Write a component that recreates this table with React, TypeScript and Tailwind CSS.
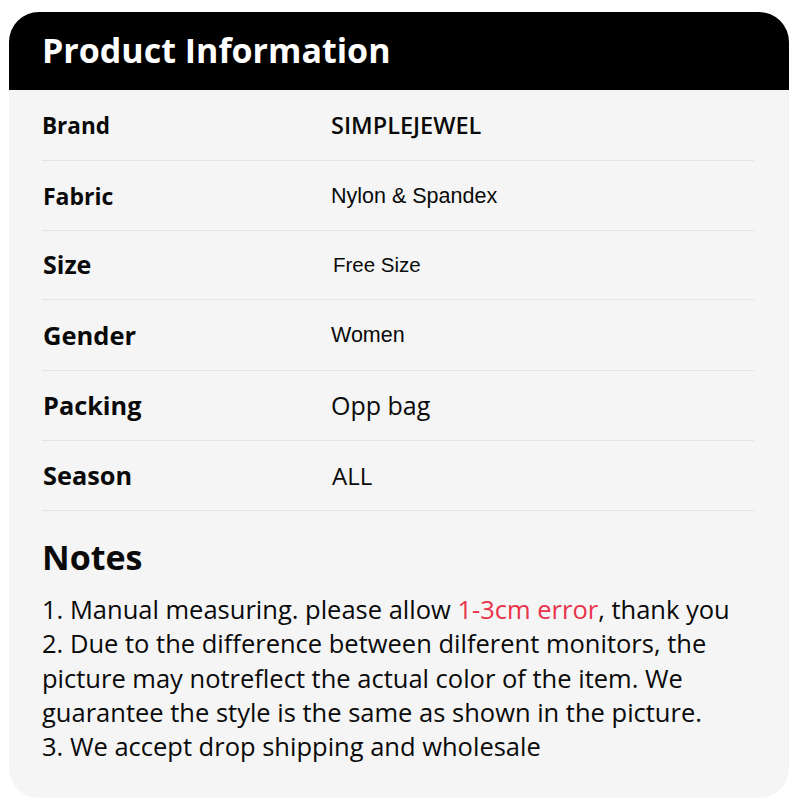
import React from "react";

const OS = { fontFamily: '"Open Sans", "Noto Sans", sans-serif' };
const HV = { fontFamily: '"Liberation Sans", Arial, sans-serif' };

type Row = { label: string; value: string; h: string; lcls: string; vcls: string; vfont: React.CSSProperties };

const rows: Row[] = [
  { label: "Brand", value: "SIMPLEJEWEL", h: "h-[71px] pt-[2px]", lcls: "text-[22.5px]", vcls: "text-[23.5px] font-semibold", vfont: OS },
  { label: "Fabric", value: "Nylon & Spandex", h: "h-[70px] pt-[2px]", lcls: "text-[23px] pl-[1px]", vcls: "text-[21.5px]", vfont: HV },
  { label: "Size", value: "Free Size", h: "h-[69px]", lcls: "text-[25px] pl-[1px]", vcls: "text-[20.5px] pl-[2px]", vfont: HV },
  { label: "Gender", value: "Women", h: "h-[71px]", lcls: "text-[25.5px] pl-[1px]", vcls: "text-[21.5px]", vfont: HV },
  { label: "Packing", value: "Opp bag", h: "h-[70px]", lcls: "text-[25.3px] pl-[1px]", vcls: "text-[25px]", vfont: OS },
  { label: "Season", value: "ALL", h: "h-[70px]", lcls: "text-[25.3px] pl-[1px]", vcls: "text-[24px] pl-[1px]", vfont: OS },
];

export default function App() {
  return (
    <div className="w-[800px] h-[800px] bg-white pt-[12px] pl-[9px]">
      <div className="w-[780px] h-[786px] bg-[#f5f5f5] rounded-[30px] overflow-hidden flex flex-col">
        <div className="h-[78px] bg-black flex items-center pl-[33px]">
          <h1 className="text-white font-bold text-[34px] leading-none pb-[2px]" style={OS}>
            Product Information
          </h1>
        </div>
        <div className="pl-[33px] pr-[35px]">
          {rows.map((r) => (
            <div key={r.label} className={`${r.h} border-b border-[#e4e4e4] flex items-center`}>
              <div className={`w-[289px] font-bold text-[#0a0a0a] ${r.lcls}`} style={OS}>
                {r.label}
              </div>
              <div className={`text-[#0a0a0a] ${r.vcls}`} style={r.vfont}>
                {r.value}
              </div>
            </div>
          ))}
        </div>
        <div className="pl-[33px] pt-[26px]">
          <h2 className="font-bold text-[34px] leading-[40px] text-[#0a0a0a]" style={OS}>
            Notes
          </h2>
          <div className="mt-[15px] text-[25.5px] leading-[34.3px] text-[#0a0a0a]" style={OS}>
            <p>
              1. Manual measuring. please allow <span className="text-[#e8334a]">1-3cm error</span>, thank you
            </p>
            <p>2. Due to the difference between dilferent monitors, the</p>
            <p>picture may notreflect the actual color of the item. We</p>
            <p>guarantee the style is the same as shown in the picture.</p>
            <p>3. We accept drop shipping and wholesale</p>
          </div>
        </div>
      </div>
    </div>
  );
}
